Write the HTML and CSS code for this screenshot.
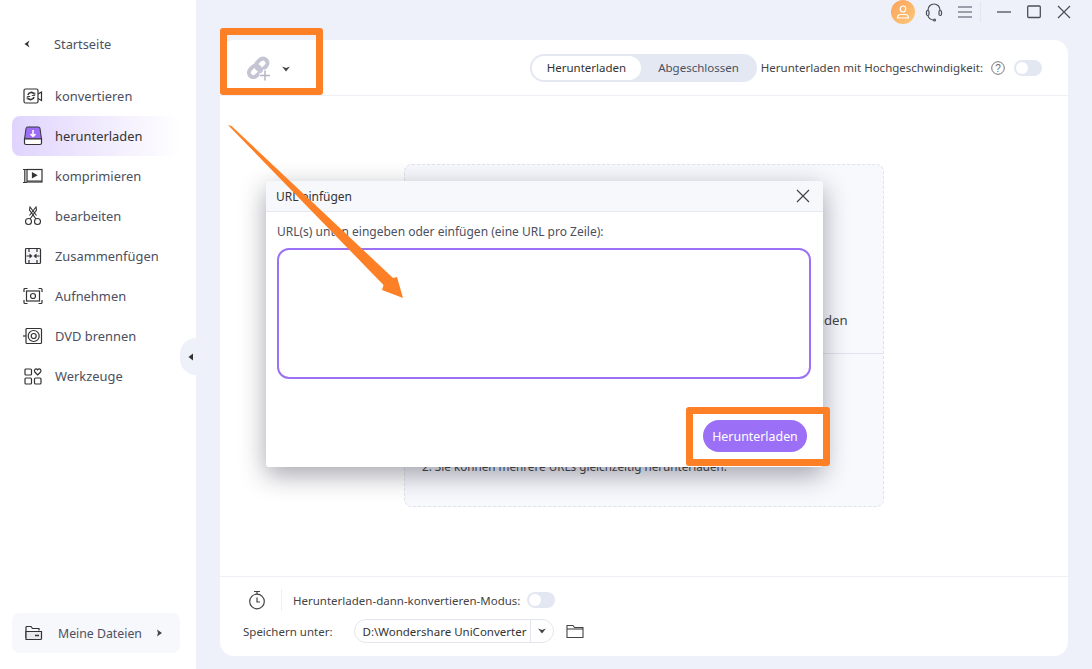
FILE: index.html
```html
<!DOCTYPE html>
<html lang="de">
<head>
  <meta charset="UTF-8" />
  <title>UniConverter</title>
  <link rel="stylesheet" href="styles.css">
</head>
<body>
  <div class="app">
    <!-- Sidebar -->
    <aside class="sidebar">
      <div class="home-link">
        <svg class="chev" width="8" height="8" viewBox="0 0 8 8"><path d="M6.500.5 1.500 4l5 3.500L5 4z" fill="#333"/></svg>
        <span>Startseite</span>
      </div>
      <nav class="nav">
        <div class="nav-item">
          <svg width="20" height="18" viewBox="0 0 20 18" fill="none" stroke="#333" stroke-width="1.2"><rect x="1" y="2" width="14" height="14" rx="1.500"/><path d="M15 7l3.500-2v8.500L15 11.500"/><path d="M5 8a3.200 3.200 0 0 1 6-.8M11 10a3.200 3.200 0 0 1-6 .8" stroke-width="1.600"/><path d="M11.800 5.500v3h-3M4.200 12.500v-3h3" stroke-width=".9"/></svg>
          <span>konvertieren</span>
        </div>
        <div class="nav-item active">
          <svg width="20" height="20" viewBox="0 0 20 20"><path d="M3 2.500Q3 1 4.500 1h11Q17 1 17 2.500L18.500 13h-17z" fill="#9d6ef5" stroke="#333" stroke-width="1"/><path d="M1.500 13h17v4q0 1.500-1.500 1.500H3Q1.500 18.500 1.500 17z" fill="#fff" stroke="#333" stroke-width="1.200"/><path d="M10 4v6M7.500 8l2.500 2.500L12.500 8" fill="none" stroke="#fff" stroke-width="1.500"/></svg>
          <span>herunterladen</span>
        </div>
        <div class="nav-item">
          <svg width="20" height="18" viewBox="0 0 20 18" fill="none" stroke="#333" stroke-width="1.200"><rect x="4" y="2.500" width="15" height="12.500"/><path d="M0 2.500h4M0 15.500h4M1.800 2.500v13M4 14h15"/><path d="M9.500 6v4.500l4-2.200z" fill="#333"/></svg>
          <span>komprimieren</span>
        </div>
        <div class="nav-item">
          <svg width="20" height="20" viewBox="0 0 20 20" fill="none" stroke="#333" stroke-width="1.100"><circle cx="5.500" cy="15.500" r="3"/><circle cx="14.500" cy="15.500" r="3"/><path d="M7 13 13.500 4 13 1 6.500 9.500M13 13 6.500 4 7 1 13.500 9.500"/></svg>
          <span>bearbeiten</span>
        </div>
        <div class="nav-item">
          <svg width="20" height="18" viewBox="0 0 20 18" fill="none" stroke="#333" stroke-width="1.200"><rect x="2.500" y="1.500" width="15" height="15" rx="1" fill="#f4f5f8"/><path d="M6 1.500v3.500M14 1.500v3.500M6 13v3.500M14 13v3.500"/><path d="M3.500 9H8M16.500 9H12" stroke-width="1"/><path d="M6.500 6.500 9.500 9l-3 2.500zM13.500 6.500l-3 2.500 3 2.500z" fill="#333" stroke="none"/></svg>
          <span>Zusammenfügen</span>
        </div>
        <div class="nav-item">
          <svg width="20" height="18" viewBox="0 0 20 18" fill="none" stroke="#333" stroke-width="1.200"><path d="M1 5V2.500Q1 1.500 2 1.500h2.500M15.500 1.500H18Q19 1.500 19 2.500V5M1 13v2.500Q1 16.500 2 16.500h2.500M15.500 16.500H18q1 0 1-1V13"/><rect x="3.500" y="4" width="13" height="10"/><circle cx="10" cy="9" r="2.500"/></svg>
          <span>Aufnehmen</span>
        </div>
        <div class="nav-item">
          <svg width="20" height="18" viewBox="0 0 20 18" fill="none" stroke="#333" stroke-width="1.200"><rect x="3" y="1.500" width="15.500" height="15" rx="1"/><circle cx="10.700" cy="9" r="5.500"/><circle cx="10.700" cy="9" r="2.500"/><path d="M0 9h3"/></svg>
          <span>DVD brennen</span>
        </div>
        <div class="nav-item">
          <svg width="20" height="18" viewBox="0 0 20 18" fill="none" stroke="#333" stroke-width="1.200"><rect x="2" y="2" width="6.500" height="6" rx="1"/><rect x="2" y="11" width="6.500" height="6" rx="1"/><rect x="11.500" y="11" width="6.500" height="6" rx="1"/><path d="M14.700 8 11.800 5Q11 3.800 11.800 2.600 13.200 1 14.700 2.800 16.200 1 17.600 2.600 18.400 3.800 17.600 5z"/></svg>
          <span>Werkzeuge</span>
        </div>
      </nav>
      <div class="my-files">
        <svg width="18" height="16" viewBox="0 0 18 16" fill="none" stroke="#333" stroke-width="1.200"><path d="M1 13V2.500Q1 1.500 2 1.500h4l1.500 2H14v2"/><path d="M1 14.500V6.500h15.500v7q0 1-1 1z" fill="#e8e8ee"/><path d="M10 10.500h4" stroke-width="1.500"/></svg>
        <span>Meine Dateien</span>
        <svg class="files-chev" width="8" height="8" viewBox="0 0 8 8"><path d="M2 .5 7 4 2 7.500 3 4z" fill="#444"/></svg>
      </div>
      <div class="collapse-tab">
        <svg width="8" height="8" viewBox="0 0 8 8"><path d="M6 .5 1.500 4 6 7.500z" fill="#333"/></svg>
      </div>
    </aside>

    <div class="main">
      <!-- Title bar -->
      <header class="titlebar">
        <span class="avatar">
          <svg width="14" height="14" viewBox="0 0 14 14" fill="none" stroke="#fff" stroke-width="1.200"><rect x="4.300" y="1" width="5.400" height="6" rx="2.700"/><path d="M1.500 13q0-3.500 3.500-3.500h4q3.500 0 3.500 3.500z"/></svg>
        </span>
        <svg class="headset" width="18" height="20" viewBox="0 0 18 20" fill="none" stroke="#4a4f5c" stroke-width="1.200"><path d="M3 9V8a6 6 0 0 1 12 0v1"/><rect x="1.500" y="8.500" width="2.500" height="5" rx="1.200"/><rect x="14" y="8.500" width="2.500" height="5" rx="1.200"/><path d="M3 13.500q.5 3.500 5 4.500"/><circle cx="9.500" cy="18" r="1"/></svg>
        <svg class="menu-icon" width="14" height="12" viewBox="0 0 14 12" stroke="#4a4f5c" stroke-width="1.200"><path d="M0 1h14M0 6h14M0 11h14"/></svg>
        <span class="tb-sep"></span>
        <svg class="win-btn" width="14" height="14" viewBox="0 0 14 14" stroke="#4a4f5c" stroke-width="1.300"><path d="M0 7h14"/></svg>
        <svg class="win-btn" width="14" height="14" viewBox="0 0 14 14" fill="none" stroke="#4a4f5c" stroke-width="1.300"><rect x=".7" y="1" width="12.600" height="11.500" rx="1"/></svg>
        <svg class="win-btn" width="14" height="14" viewBox="0 0 14 14" stroke="#4a4f5c" stroke-width="1.200"><path d="M1 1l12 12M13 1 1 13"/></svg>
      </header>

      <section class="panel">
        <div class="panel-top">
          <div class="add-url">
            <svg width="26" height="26" viewBox="0 0 26 26" fill="none"><g stroke="#c5c4d4" stroke-width="4" transform="rotate(-45 12 12)"><rect x="1" y="7.500" width="12.500" height="9" rx="4.500"/><rect x="11" y="7.500" width="12.500" height="9" rx="4.500"/></g><path d="M19 13.500v11M13.500 19h11" stroke="#fff" stroke-width="4"/><path d="M19 14.500v10M14 19.500h10" stroke="#b5b5c3" stroke-width="1.500"/></svg>
            <svg width="8" height="6" viewBox="0 0 8 6"><path d="M0 .5 4 2l4-1.500L4 5.500z" fill="#444"/></svg>
          </div>
          <div class="tabs">
            <span class="tab on">Herunterladen</span>
            <span class="tab">Abgeschlossen</span>
          </div>
          <span class="speed-label">Herunterladen mit Hochgeschwindigkeit:</span>
          <svg class="help" width="14" height="14" viewBox="0 0 14 14" fill="none"><circle cx="7" cy="7" r="6.300" stroke="#777"/><text x="7" y="10.500" font-size="10" text-anchor="middle" fill="#666" font-family="Liberation Sans">?</text></svg>
          <span class="toggle"></span>
        </div>

        <div class="panel-body">
          <div class="dropzone">
            <div class="drop-upper">
              <p>Fügen Sie eine URL hier ein, um das Video sofort herunterzuladen</p>
            </div>
            <div class="drop-lower">
              <p>1. Sie können Videos von vielen Websites herunterladen.</p>
              <p>2. Sie können mehrere URLs gleichzeitig herunterladen.</p>
            </div>
          </div>
        </div>

        <footer class="panel-foot">
          <div class="foot-row">
            <svg class="timer" width="18" height="20" viewBox="0 0 18 20" fill="none" stroke="#444" stroke-width="1.200"><circle cx="9" cy="11.500" r="7.300"/><path d="M6 1.500h6M9 1.500v2.500M9 7.500v4.500h3"/></svg>
            <span class="foot-sep"></span>
            <span>Herunterladen-dann-konvertieren-Modus:</span>
            <span class="toggle"></span>
          </div>
          <div class="foot-row save-row">
            <span class="save-label">Speichern unter:</span>
            <div class="path-box">
              <span class="path-text">D:\Wondershare UniConverter</span>
              <span class="path-arrow"><svg width="8" height="6" viewBox="0 0 8 6"><path d="M0 .5 4 2l4-1.500L4 5.500z" fill="#444"/></svg></span>
            </div>
            <svg width="18" height="15" viewBox="0 0 18 15" fill="none" stroke="#444" stroke-width="1.100"><path d="M1 13.500V1.500h6l1.500 2H17v10z"/><path d="M1 5h16"/></svg>
          </div>
        </footer>
      </section>
    </div>
  </div>

  <!-- URL dialog -->
  <div class="dialog">
    <div class="dialog-head">
      <span>URL einfügen</span>
      <svg width="14" height="14" viewBox="0 0 14 14" stroke="#444" stroke-width="1.200"><path d="M1 1l12 12M13 1 1 13"/></svg>
    </div>
    <div class="dialog-body">
      <label class="dialog-label">URL(s) unten eingeben oder einfügen (eine URL pro Zeile):</label>
      <div class="url-input"></div>
      <div class="dialog-actions"><button class="primary">Herunterladen</button></div>
    </div>
  </div>

  <!-- Annotations on top of the screenshot -->
  <div class="mark mark-top"></div>
  <div class="mark mark-bottom"></div>
  <svg class="arrow" width="190" height="190" viewBox="0 0 190 190"><path d="M0 0 3.500 1 165 153 169 152 175 173 154 165 155.500 160z" fill="#fe8026"/></svg>
</body>
</html>
```

FILE: styles.css
```css
* {
  box-sizing: border-box;
}

html, body {
  margin: 0;
  height: 100%;
}

body {
  font-family: "Noto Sans", Arial, sans-serif;
  font-size: 11.500px;
  color: #444;
  overflow: hidden;
  position: relative;
}

.app {
  display: flex;
  height: 669px;
}

/* Sidebar */
.sidebar {
  width: 196px;
  flex-shrink: 0;
  background: white;
  display: flex;
  flex-direction: column;
  padding: 0 16px 16px 12px;
  position: relative;
}

.home-link {
  display: flex;
  align-items: center;
  gap: 23px;
  height: 24px;
  margin-top: 32px;
  padding-left: 11px;
  color: #4b5060;
  font-size: 12.800px;
}

.nav {
  margin-top: 20px;
  flex: 1;
}

.nav-item {
  display: flex;
  align-items: center;
  gap: 12px;
  height: 40px;
  padding-left: 11px;
  font-size: 12.900px;
  color: #4b5060;
  border-radius: 8px;
}

.nav-item.active {
  background: linear-gradient(90deg, #e0d4fd, #ffffff);
  color: #333;
}

.my-files {
  display: flex;
  align-items: center;
  gap: 15px;
  height: 40px;
  padding-left: 13px;
  background: #f7f8fc;
  border-radius: 8px;
  color: #4b5060;
  font-size: 12.300px;
}

.files-chev {
  margin-left: -2px;
}

.collapse-tab {
  position: absolute;
  right: 0;
  top: 338px;
  width: 16px;
  height: 37px;
  padding-left: 7px;
  background: #eef1fa;
  border-radius: 16px 0 0 16px;
  display: flex;
  align-items: center;
}

/* Main area */
.main {
  flex: 1;
  background: #eef1fa;
  display: flex;
  flex-direction: column;
  padding: 0 24px 13px;
}

.titlebar {
  height: 40px;
  margin-right: -3px;
  padding-bottom: 17px;
  display: flex;
  align-items: center;
  justify-content: flex-end;
}

.avatar {
  width: 24px;
  height: 24px;
  border-radius: 50%;
  background: linear-gradient(135deg, #fba25a, #fdc878);
  display: flex;
  align-items: center;
  justify-content: center;
}

.headset {
  margin-left: 10px;
}

.menu-icon {
  margin-left: 15px;
}

.tb-sep {
  width: 1px;
  height: 20px;
  margin-left: 8px;
  background: #e3e6f0;
}

.win-btn {
  margin-left: 16px;
}

.panel {
  flex: 1;
  background: white;
  border-radius: 14px;
  display: flex;
  flex-direction: column;
}

.panel-top {
  height: 56px;
  display: flex;
  align-items: center;
  padding-right: 26px;
  border-bottom: 1px solid #eef0f5;
}

.add-url {
  display: flex;
  align-items: center;
  gap: 10px;
  margin-left: 26px;
  margin-right: auto;
  padding-top: 2px;
}

.tabs {
  display: flex;
  height: 28px;
  padding: 2px;
  background: #e4e8f2;
  border-radius: 14px;
  margin-right: 4px;
}

.tab {
  padding: 0 16px 0 17px;
  line-height: 24px;
  color: #4b5060;
}

.tab.on {
  padding: 0 15px;
  background: white;
  border-radius: 12px;
  color: #333;
}

.help {
  margin: 0 9px 0 8px;
}

.toggle {
  width: 28px;
  height: 16px;
  border-radius: 8px;
  background: #e3e7f1;
  position: relative;
  display: inline-block;
}

.toggle::before {
  content: "";
  position: absolute;
  left: 2px;
  top: 2px;
  width: 12px;
  height: 12px;
  border-radius: 50%;
  background: white;
}

.panel-body {
  flex: 1;
  display: flex;
  justify-content: center;
  padding-top: 68px;
  padding-bottom: 69px;
}

.dropzone {
  width: 480px;
  background: #f8f9fd;
  border: 1px dashed #dfe2ec;
  border-radius: 8px;
  display: flex;
  flex-direction: column;
}

.drop-upper {
  height: 189px;
  padding-top: 146px;
  text-align: center;
  border-bottom: 1px solid #e2e3f0;
  white-space: nowrap;
  font-size: 13.200px;
}

.drop-upper p,
.drop-lower p {
  margin: 0;
}

.drop-lower {
  padding: 82px 0 0 17px;
  line-height: 20px;
  font-size: 11.700px;
}

.panel-foot {
  height: 80px;
  border-top: 1px solid #eef0f5;
  padding: 12px 0 0 23px;
}

.foot-row {
  display: flex;
  align-items: center;
  height: 22px;
}

.timer {
  margin-left: 5px;
}

.foot-sep {
  width: 1px;
  height: 22px;
  background: #eef0f5;
  margin: 0 11px 0 15px;
}

.foot-row .toggle {
  margin-left: 7px;
}

.save-row {
  margin-top: 8px;
  height: 24px;
}

.path-box {
  display: flex;
  align-items: center;
  width: 200px;
  height: 24px;
  margin: 0 12px 0 22px;
  border: 1px solid #e3e6ee;
  border-radius: 12px;
  padding-left: 7px;
  color: #333;
}

.path-text {
  flex: 1;
  white-space: nowrap;
  overflow: hidden;
}

.path-arrow {
  width: 23px;
  height: 22px;
  border-left: 1px solid #e3e6ee;
  display: flex;
  align-items: center;
  justify-content: center;
}

/* URL dialog */
.dialog {
  position: absolute;
  left: 266px;
  top: 181px;
  width: 557px;
  height: 286px;
  background: white;
  border-radius: 3px;
  font-size: 12px;
  box-shadow: 0 8px 26px rgba(30, 30, 50, 0.4);
}

.dialog-head {
  height: 31px;
  background: #f7f8fc;
  border-bottom: 1px solid #e6e9f2;
  border-radius: 3px 3px 0 0;
  display: flex;
  align-items: center;
  justify-content: space-between;
  padding: 0 13px 0 10px;
  color: #333;
}

.dialog-body {
  padding: 11px 12px 0 11px;
}

.dialog-label {
  display: block;
  height: 25px;
  line-height: 17px;
  color: #4b5060;
}

.url-input {
  height: 131px;
  border: 2px solid #9b72f5;
  border-radius: 12px;
}

.dialog-actions {
  display: flex;
  justify-content: flex-end;
  padding: 41px 4px 0 0;
}

.primary {
  width: 104px;
  height: 32px;
  border: none;
  border-radius: 16px;
  background: #9b6ff6;
  color: white;
  font-family: inherit;
  font-size: 12.400px;
  padding: 0;
}

/* Orange annotations */
.mark {
  position: absolute;
  border: 7px solid #fe8026;
  border-radius: 3px;
}

.mark-top {
  left: 220px;
  top: 28px;
  width: 103px;
  height: 67px;
}

.mark-bottom {
  left: 686px;
  top: 407px;
  width: 144px;
  height: 59px;
}

.arrow {
  position: absolute;
  left: 228px;
  top: 125px;
}
```
